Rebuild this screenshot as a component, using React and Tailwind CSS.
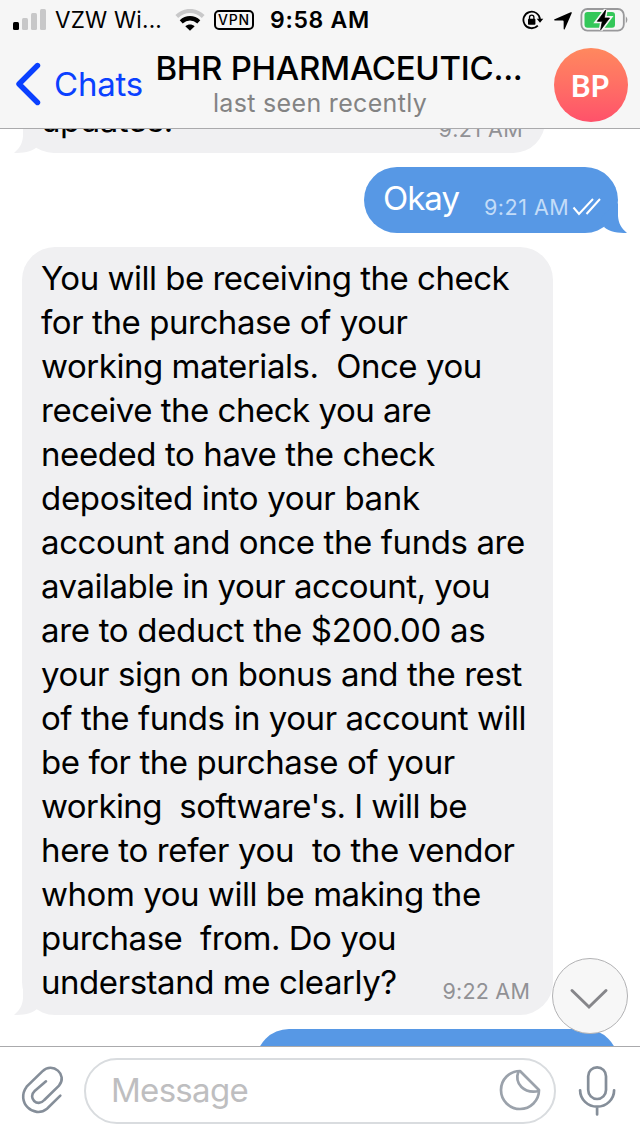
const lines = [
  { text: 'You will be receiving the check', tracking: 'tracking-[-0.5px]' },
  { text: 'for the purchase of your', tracking: 'tracking-[-0.43px]' },
  { text: 'working materials.  Once you', tracking: 'tracking-[-0.46px]' },
  { text: 'receive the check you are', tracking: 'tracking-[-0.49px]' },
  { text: 'needed to have the check', tracking: 'tracking-[-0.41px]' },
  { text: 'deposited into your bank', tracking: 'tracking-[-0.33px]' },
  { text: 'account and once the funds are', tracking: 'tracking-[-0.4px]' },
  { text: 'available in your account, you', tracking: 'tracking-[-0.49px]' },
  { text: 'are to deduct the $200.00 as', tracking: 'tracking-[-0.31px]' },
  { text: 'your sign on bonus and the rest', tracking: 'tracking-[-0.4px]' },
  { text: 'of the funds in your account will', tracking: 'tracking-[-0.45px]' },
  { text: 'be for the purchase of your', tracking: 'tracking-[-0.44px]' },
  { text: "working  software's. I will be", tracking: 'tracking-[-0.58px]' },
  { text: 'here to refer you  to the vendor', tracking: 'tracking-[-0.36px]' },
  { text: 'whom you will be making the', tracking: 'tracking-[-0.46px]' },
  { text: 'purchase  from. Do you', tracking: 'tracking-[-0.47px]' },
  { text: 'understand me clearly?', tracking: 'tracking-[-0.45px]' },
];

function Tail({ side }) {
  return (
    <svg
      viewBox="0 0 30 30"
      className={`absolute bottom-0 size-[30px] ${
        side === 'left' ? '-left-[9px] -scale-x-100 fill-[#f0f0f2]' : '-right-[10px] fill-[#5798e5]'
      }`}
    >
      <path d="M20 0V13C20.5 20 23 25 29 30C20 30 12 29 6.5 24.5L3 14Z" />
    </svg>
  );
}

function StatusBar() {
  return (
    <div className="flex h-10 shrink-0 items-center pl-[13px] pr-[11px] text-black">
      <svg viewBox="0 0 34 22" className="h-[22px] w-[34px]">
        <rect x="0" y="13" width="6" height="8" rx="1.5" />
        <rect x="9" y="9" width="6" height="12" rx="1.5" fill="#c8c8c9" />
        <rect x="18" y="4" width="6" height="17" rx="1.5" fill="#c8c8c9" />
        <rect x="27" y="0" width="6" height="21" rx="1.5" fill="#c8c8c9" />
      </svg>
      <span className="ml-2 w-[107px] whitespace-nowrap text-[22.5px] leading-none tracking-[0.2px]">VZW Wi...</span>
      <svg viewBox="0 0 30 22" className="ml-[13px] h-[22px] w-[30px]" fill="none">
        <path d="M1.8 7.5C9.5 0 20.5 0 28.2 7.5" stroke="#c8c8c9" strokeWidth="4" />
        <path d="M6.2 12.8C11.5 8 18.5 8 23.8 12.8" stroke="#000" strokeWidth="4.4" />
        <path d="M10.3 17.2C13 14.8 17 14.8 19.7 17.2L15 21.8Z" fill="#000" />
      </svg>
      <span className="ml-[9px] flex h-5 w-10 items-center justify-center rounded-[5px] border-2 border-black text-[14px] font-medium leading-none tracking-[0.8px]">
        VPN
      </span>
      <span className="ml-4 whitespace-nowrap text-[23px] font-semibold leading-none tracking-[0.7px]">9:58 AM</span>
      <svg viewBox="0 0 22 20" className="ml-auto h-5 w-[22px]" fill="none">
        <path d="M18 9.5A8.3 8.3 0 1 0 15.8 15.6" stroke="#000" strokeWidth="1.8" />
        <path d="M14.7 8.8H21.3L18 12.8Z" fill="#000" />
        <rect x="6" y="8.8" width="7.4" height="6" rx="0.8" fill="#000" />
        <path d="M7.5 9V7.3a2.2 2.2 0 0 1 4.4 0V9" stroke="#000" strokeWidth="1.3" />
      </svg>
      <svg viewBox="0 0 55 55" className="ml-[10px] mt-[2px] size-[18px]">
        <path d="M51 1Q56 -1 54 4L33 52Q31 56 29.500 51V29Q29.500 26 26.500 26H3Q-2 25 2 22.500Z" />
      </svg>
      <svg viewBox="0 0 50 26" className="ml-[7px] h-[26px] w-[50px]" fill="none">
        <rect x="2.4" y="2" width="42.4" height="21.600" rx="6" stroke="#99999b" strokeWidth="1.8" />
        <path d="M46.8 9.200Q50 12.700 46.800 16.400Z" fill="#99999b" />
        <rect x="5.500" y="4.900" width="30.500" height="15.800" rx="3" fill="#34c759" />
        <path d="M26.700 3L18.300 14.300H23.300L21.700 22.800L30.500 11H25.300Z" stroke="#f6f6f6" strokeWidth="4" />
        <path d="M26.700 3L18.300 14.300H23.300L21.700 22.800L30.500 11H25.300Z" fill="#000" stroke="#000" strokeWidth="0.8" strokeLinejoin="round" />
      </svg>
    </div>
  );
}

function Header() {
  return (
    <header className="flex h-[129px] shrink-0 flex-col border-b border-[#aaaaac] bg-[#f6f6f6]">
      <StatusBar />
      <div className="flex flex-1">
        <div className="flex w-[154px] items-start pl-4 pt-[22px] text-[#0a40ff]">
          <svg viewBox="0 0 25 44" className="h-11 w-[25px]" fill="none">
            <path d="M21.5 3.5L3 22L21.5 40.5" stroke="currentColor" strokeWidth="5.4" strokeLinecap="round" strokeLinejoin="round" />
          </svg>
          <span className="ml-[13px] text-[33px] leading-[44px] tracking-[-0.2px]">Chats</span>
        </div>
        <div className="flex w-[370px] flex-col items-center whitespace-nowrap pt-[8px]">
          <h1 className="text-[33px] font-medium leading-10 tracking-[-0.28px] text-black">BHR PHARMACEUTIC...</h1>
          <p className="mr-[38px] text-[25px] leading-[30px] tracking-[0.33px] text-[#838383]">last seen recently</p>
        </div>
        <div className="ml-[30px] mt-2 flex size-[74px] items-center justify-center rounded-full bg-linear-to-b from-[#ff885e] to-[#ff516a] pr-[2px] font-['Lato',sans-serif] text-[30px] font-bold text-white">
          BP
        </div>
      </div>
    </header>
  );
}

function Checks() {
  return (
    <svg viewBox="0 0 30 18" className="h-[18px] w-[30px]" fill="none" stroke="#fff" strokeWidth="2">
      <path d="M1.5 9.5L7 16L21 1M14.5 16L28 1" />
    </svg>
  );
}

function Messages() {
  return (
    <main className="flex h-[917px] shrink-0 flex-col gap-3.5 overflow-hidden text-[33px] leading-[44px]">
      <div className="relative -mt-10 ml-[22px] flex h-16 w-[523px] shrink-0 items-start justify-between rounded-[33px] bg-[#f0f0f2] pl-[19px] pr-[22px] pt-[9px] text-black">
        <span className="tracking-[-0.4px]">updates.</span>
        <span className="mt-[9px] text-[21.5px] tracking-[0.4px] text-[#919195]">9:21 AM</span>
        <Tail side="left" />
      </div>

      <div className="relative mr-[22px] flex h-[66px] w-[254px] shrink-0 items-start self-end whitespace-nowrap rounded-[33px] bg-[#5798e5] pl-[19px] pt-[9px] text-white">
        <span className="w-[101px] tracking-[-1px]">Okay</span>
        <span className="mt-[9px] w-[88px] text-[21.5px] tracking-[0.5px] text-[#c3dcf8]">9:21 AM</span>
        <span className="mt-[22px]">
          <Checks />
        </span>
        <Tail side="right" />
      </div>

      <div className="relative ml-[22px] flex h-[768px] w-[531px] shrink-0 items-end justify-between rounded-[33px] bg-[#f0f0f2] pb-[11px] pl-[19px] pr-[23px] text-black">
        <div className="w-0 whitespace-pre">
          {lines.map((line) => (
            <p key={line.text} className={line.tracking}>{line.text}</p>
          ))}
        </div>
        <span className="-mb-[9px] text-[21.5px] tracking-[0.2px] text-[#919195]">9:22 AM</span>
        <Tail side="left" />
      </div>

      <div className="mr-[22px] h-[66px] w-[362px] shrink-0 self-end rounded-[33px] bg-[#5798e5]" />
    </main>
  );
}

function Composer() {
  return (
    <footer className="flex h-[90px] shrink-0 items-start border-t border-[#aaaaac] bg-white pl-5 pt-[11px]">
      <svg viewBox="30 45 132 150" className="mt-[7px] h-[50px] w-11" fill="none" stroke="#858e99" strokeWidth="7.8" strokeLinecap="round">
        <path d="M151 137L111 176C72 208 16 156 50 110L97 64C128 34 174 74 147 107L103 150C82 174 52 143 74 123L108 94" />
      </svg>
      <div className="ml-5 flex h-[66px] w-[472px] items-center justify-between rounded-full border-2 border-[#d9dcdf] pb-[2px] pl-[25px] pr-[13px]">
        <span className="text-[33px] leading-[44px] tracking-[-0.7px] text-[#bebec0]">Message</span>
        <svg viewBox="0 0 42 42" className="size-[42px]" fill="none" stroke="#9ba2ab" strokeWidth="2.7" strokeLinejoin="round">
          <path d="M21 2A19 19 0 1 0 40 21Z" />
          <path d="M19.500 2C15 15 25 25 40 22" />
        </svg>
      </div>
      <svg viewBox="0 0 38 52" className="ml-[22px] mt-[7px] h-[52px] w-[38px]" fill="none" stroke="#858e99" strokeWidth="2.7" strokeLinecap="round">
        <rect x="10.200" y="2.300" width="17.800" height="31.700" rx="8.900" />
        <path d="M2.100 25.300A17 16.400 0 0 0 36.100 25.300M19.100 42V49.500" />
      </svg>
    </footer>
  );
}

export default function App() {
  return (
    <div className="relative flex h-[1136px] w-[640px] flex-col overflow-hidden bg-white font-['Inter','Liberation_Sans',sans-serif]">
      <Header />
      <Messages />
      <Composer />
      {/* Scroll to latest */}
      <button
        type="button"
        className="absolute bottom-[102px] right-3 flex size-[76px] items-center justify-center rounded-full border border-[#b2b2b4] bg-[#f7f7f7]"
      >
        <svg viewBox="0 0 40 22" className="mr-[2px] mt-[5px] h-[22px] w-10" fill="none">
          <path d="M3 2.500L20 19L37 2.500" stroke="#86868a" strokeWidth="3" strokeLinecap="round" />
        </svg>
      </button>
    </div>
  );
}
